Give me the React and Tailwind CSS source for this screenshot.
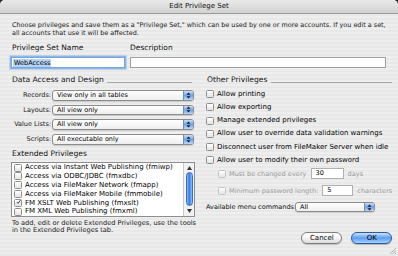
import React from "react";

const FONT = "font-['DejaVu_Sans',sans-serif]";

function Arrows() {
  return (
    <svg width="5" height="7" viewBox="0 0 5 7">
      <path d="M2.5 0.5 L4.5 2.8 L0.5 2.8 Z" fill="#1a1a1a" />
      <path d="M2.5 6.5 L4.5 4.2 L0.5 4.2 Z" fill="#1a1a1a" />
    </svg>
  );
}

function Popup({ text, className = "" }) {
  return (
    <div className={"flex h-[10.5px] shrink-0 items-stretch rounded-[3px] border border-[#8c8c8c] bg-gradient-to-b from-white to-[#eeeeee] shadow-[0_1px_1px_rgba(0,0,0,0.15)] " + className}>
      <span className="flex flex-1 items-center whitespace-nowrap pl-[4px] text-[6.5px] leading-none text-black">{text}</span>
      <span className="flex w-[10px] items-center justify-center rounded-r-[2px] border-l border-[#6f8fb8] bg-gradient-to-b from-[#c9dcf5] via-[#6ea3e8] to-[#b9d8fa]">
        <Arrows />
      </span>
    </div>
  );
}

function Check({ checked = false, disabled = false }) {
  return (
    <span
      className={
        "flex h-[8px] w-[8px] shrink-0 items-center justify-center rounded-[1.5px] border bg-gradient-to-b from-white to-[#e4e4e4] " +
        (disabled ? "border-[#c4c4c4]" : "border-[#8e8e8e]")
      }
    >
      {checked && (
        <svg width="9" height="8" viewBox="0 0 9 8" className="-mt-[2px] ml-[1px]">
          <path d="M1.5 4.2 L3.6 6.5 L8 0.8" stroke="#0d1f3a" strokeWidth="1.6" fill="none" />
        </svg>
      )}
    </span>
  );
}

function Heading({ children, lineClass = "" }) {
  return (
    <div className="flex h-[10px] shrink-0 items-center gap-[3px]">
      <span className="whitespace-nowrap pl-[1px] text-[7.6px] leading-[10px] text-[#111]">{children}</span>
      <span className={"mt-[5px] h-[1px] flex-1 bg-[#a9a9a9] " + lineClass}></span>
    </div>
  );
}

function PopRow({ label, text }) {
  return (
    <div className="flex shrink-0 items-center">
      <span className="w-[41px] shrink-0 whitespace-nowrap pr-[1px] text-right text-[6.5px] leading-none text-[#222]">{label}</span>
      <Popup text={text} className="flex-1" />
    </div>
  );
}

function OtherRow({ children }) {
  return (
    <div className="flex h-[8px] shrink-0 items-center gap-[3px]">
      <Check />
      <span className="whitespace-nowrap text-[7px] leading-none text-black">{children}</span>
    </div>
  );
}

const ext = [
  ["Access via Instant Web Publishing (fmiwp)", false],
  ["Access via ODBC/JDBC (fmxdbc)", false],
  ["Access via FileMaker Network (fmapp)", false],
  ["Access via FileMaker Mobile (fmmobile)", false],
  ["FM XSLT Web Publishing (fmxslt)", true],
  ["FM XML Web Publishing (fmxml)", false],
];

export default function App() {
  return (
    <div className={"h-[256px] w-[398px] overflow-hidden bg-[#2a2a2a] " + FONT}>
      <div className="relative flex h-full w-full flex-col overflow-hidden rounded-t-[5px] bg-[repeating-linear-gradient(to_bottom,#eeeeee_0px,#eeeeee_2px,#e8e8e8_2px,#e8e8e8_4px)]">
        {/* title bar */}
        <div className="flex h-[14px] shrink-0 items-center justify-center border-b border-[#9b9b9b] bg-gradient-to-b from-[#e9e9e9] to-[#d2d2d2]">
          <span className="whitespace-nowrap text-[7px] leading-none text-[#111]">Edit Privilege Set</span>
        </div>

        <div className="flex shrink-0 flex-col px-[11px]">
          <p className="mt-[7px] shrink-0 whitespace-nowrap pl-[1px] text-[6.45px] leading-[8px] text-[#1a1a1a]">
            Choose privileges and save them as a "Privilege Set," which can be used by one or more accounts. If you edit a set,
            <br />
            all accounts that use it will be affected.
          </p>

          {/* name + description */}
          <div className="mt-[6px] flex shrink-0 gap-[5px]">
            <div className="flex w-[114px] flex-col gap-[4px]">
              <span className="whitespace-nowrap pl-[1px] text-[7.5px] leading-[10px] text-[#111]">Privilege Set Name</span>
              <div className="flex h-[11px] items-center border border-[#7aa5db] bg-white shadow-[0_0_0_1.5px_#8db7ea]">
                <span className="ml-[1px] bg-[#b5d3f7] px-[1px] text-[6.5px] leading-[8px] text-black">WebAccess</span>
              </div>
            </div>
            <div className="flex flex-1 flex-col gap-[4px] pr-[1px]">
              <span className="whitespace-nowrap text-[7.5px] leading-[10px] text-[#111]">Description</span>
              <div className="h-[11px] border border-[#a0a0a0] bg-white"></div>
            </div>
          </div>

          {/* two columns */}
          <div className="mt-[7px] flex shrink-0 items-start gap-[11px]">
            {/* left */}
            <div className="flex w-[184px] shrink-0 flex-col">
              <Heading lineClass="mr-[3px]">Data Access and Design</Heading>
              <div className="mt-[5px] flex shrink-0 flex-col gap-[4.2px] pr-[1px]">
                <PopRow label="Records:" text="View only in all tables" />
                <PopRow label="Layouts:" text="All view only" />
                <PopRow label="Value Lists:" text="All view only" />
                <PopRow label="Scripts:" text="All executable only" />
              </div>
              <div className="mt-[4px] h-[10px] shrink-0 whitespace-nowrap pl-[1px] text-[7.6px] leading-[10px] text-[#111]">
                Extended Privileges
              </div>
              <div className="mt-[3px] flex h-[55px] shrink-0 overflow-hidden border border-[#8e8e8e] bg-white">
                <div className="flex flex-1 flex-col pl-[2px] pt-[0.5px]">
                  {ext.map(([t, c]) => (
                    <div key={t} className="flex h-[8.9px] shrink-0 items-center gap-[3px]">
                      <Check checked={c} />
                      <span className="whitespace-nowrap text-[7px] leading-none text-black">{t}</span>
                    </div>
                  ))}
                </div>
                <div className="flex w-[11px] flex-col items-center border-l border-[#c8c8c8] bg-[#f2f2f2]">
                  <svg width="5" height="4" viewBox="0 0 5 4" className="mt-[3px]">
                    <path d="M2.5 0 L5 4 L0 4 Z" fill="#333" />
                  </svg>
                  <div className="mt-[2px] h-[34px] w-[7px] rounded-full border border-[#3f6fb8] bg-gradient-to-r from-[#7fb0ef] via-[#3b82e6] to-[#8fc0f5]"></div>
                  <div className="flex-1"></div>
                  <svg width="5" height="4" viewBox="0 0 5 4" className="mb-[3px]">
                    <path d="M2.5 4 L5 0 L0 0 Z" fill="#333" />
                  </svg>
                </div>
              </div>
              <p className="mt-[3px] shrink-0 whitespace-nowrap pl-[1px] text-[6.6px] leading-[7.5px] text-[#1a1a1a]">
                To add, edit or delete Extended Privileges, use the tools
                <br />
                in the Extended Privileges tab.
              </p>
            </div>

            {/* right */}
            <div className="flex flex-1 flex-col pr-[1px]">
              <Heading>Other Privileges</Heading>
              <div className="mt-[5px] flex shrink-0 flex-col gap-[5.3px]">
                <OtherRow>Allow printing</OtherRow>
                <OtherRow>Allow exporting</OtherRow>
                <OtherRow>Manage extended privileges</OtherRow>
                <OtherRow>Allow user to override data validation warnings</OtherRow>
                <OtherRow>Disconnect user from FileMaker Server when idle</OtherRow>
                <OtherRow>Allow user to modify their own password</OtherRow>
              </div>
              <div className="mt-[4px] flex h-[11px] shrink-0 items-center gap-[3px] pl-[12px]">
                <Check disabled />
                <span className="whitespace-nowrap text-[6.6px] leading-none text-[#9a9a9a]">Must be changed every</span>
                <div className="ml-[1px] flex h-[11px] w-[33px] items-center border border-[#b0b0b0] bg-white pl-[4px] text-[6.5px] text-black">30</div>
                <span className="ml-[1px] whitespace-nowrap text-[6.6px] leading-none text-[#9a9a9a]">days</span>
              </div>
              <div className="mt-[6px] flex h-[11px] shrink-0 items-center gap-[3px] pl-[12px]">
                <Check disabled />
                <span className="whitespace-nowrap text-[6.6px] leading-none text-[#9a9a9a]">Minimum password length:</span>
                <div className="ml-[1px] flex h-[11px] w-[31px] items-center border border-[#b0b0b0] bg-white pl-[4px] text-[6.5px] text-black">5</div>
                <span className="ml-[1px] whitespace-nowrap text-[6.6px] leading-none text-[#9a9a9a]">characters</span>
              </div>
              <div className="mt-[5.5px] flex shrink-0 items-center gap-[1px]">
                <span className="w-[88px] shrink-0 whitespace-nowrap text-[6.5px] leading-none text-[#111]">Available menu commands:</span>
                <Popup text="All" className="w-[80px]" />
              </div>
              <div className="mt-[20px] flex shrink-0 justify-end gap-[9px]">
                <button className="flex h-[12px] w-[41px] items-center justify-center rounded-full border border-[#7d7d7d] bg-gradient-to-b from-white via-[#f4f4f4] to-[#dcdcdc] text-[7px] leading-none text-black shadow-[0_1px_1px_rgba(0,0,0,0.2)]">
                  Cancel
                </button>
                <button className="flex h-[12px] w-[41px] items-center justify-center rounded-full border border-[#2b5aa5] bg-gradient-to-b from-[#cfe3fb] via-[#5b9cf0] to-[#a9d3ff] text-[7px] leading-none text-black shadow-[0_1px_1px_rgba(0,0,0,0.25)]">
                  OK
                </button>
              </div>
            </div>
          </div>
        </div>

        {/* resize grip */}
        <svg width="7" height="7" viewBox="0 0 7 7" className="absolute bottom-[2px] right-[2px]">
          <path d="M7 1 L1 7 M7 3.5 L3.5 7 M7 6 L6 7" stroke="#9a9a9a" strokeWidth="0.7" />
        </svg>
      </div>
    </div>
  );
}
